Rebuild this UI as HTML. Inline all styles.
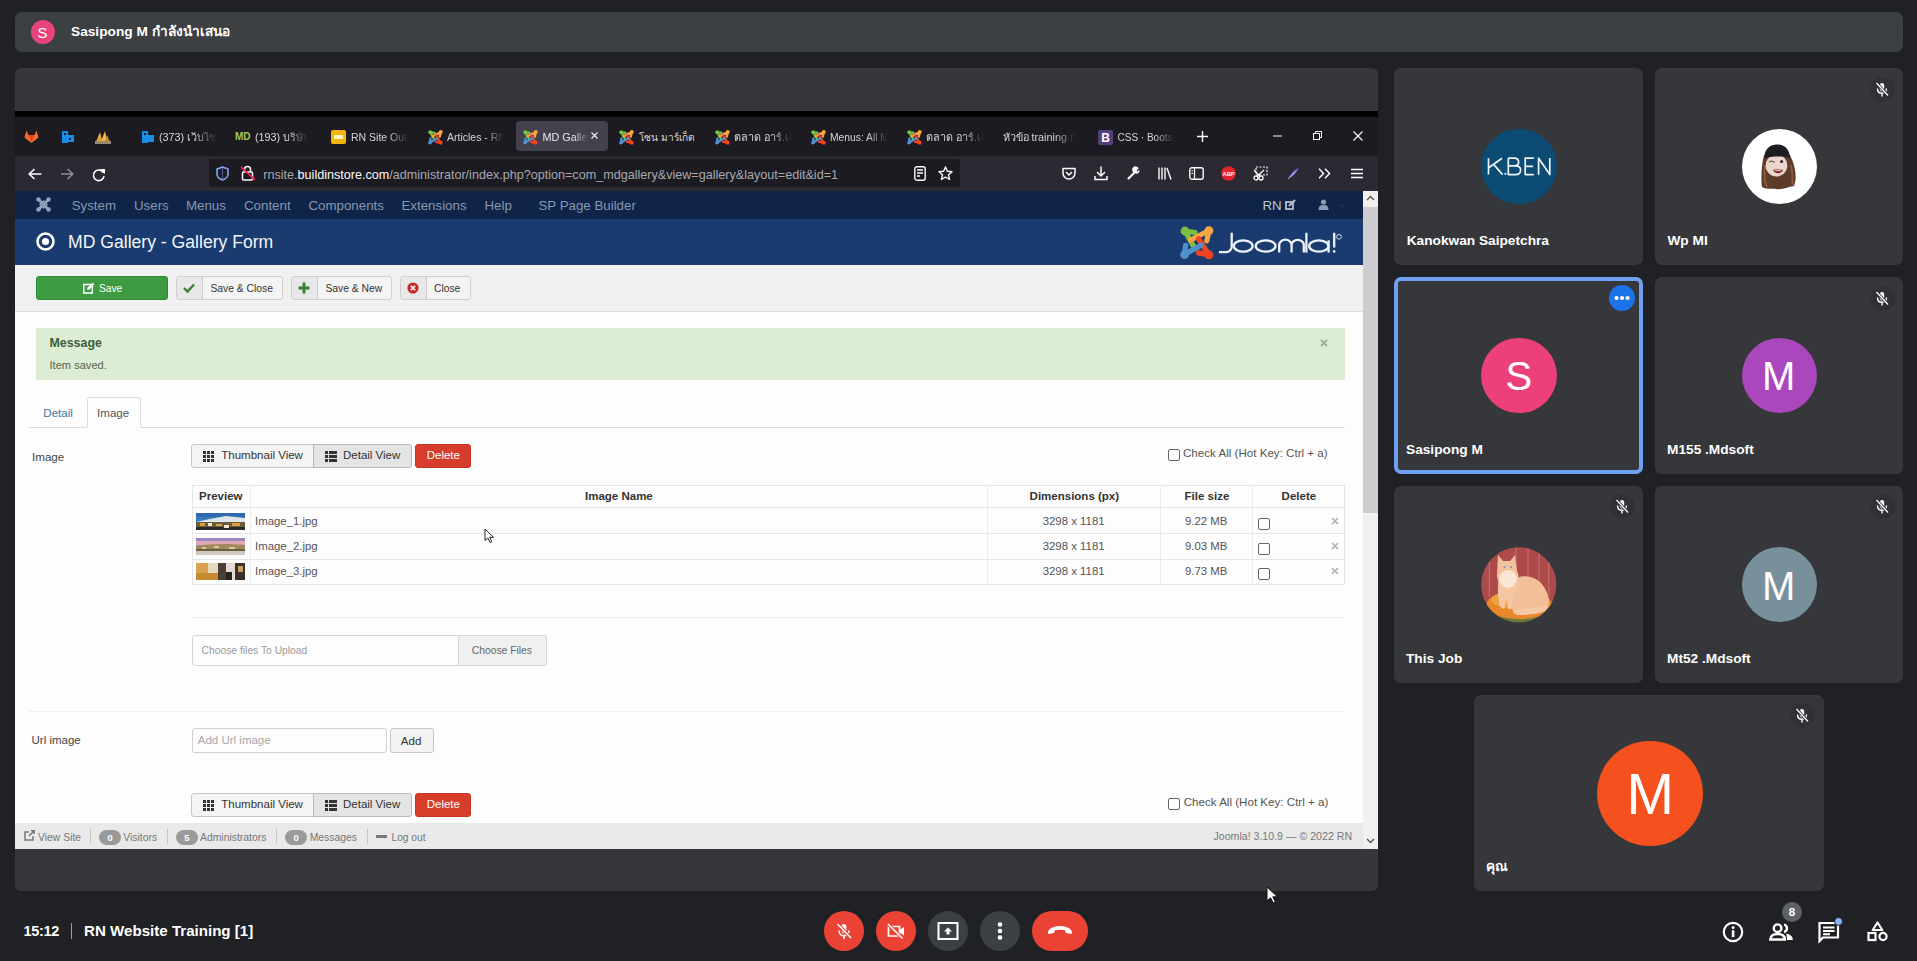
<!DOCTYPE html>
<html><head><meta charset="utf-8">
<style>
*{margin:0;padding:0;box-sizing:border-box}
html,body{width:1917px;height:961px;overflow:hidden;background:#202124;font-family:"Liberation Sans",sans-serif;position:relative}
.a{position:absolute}
.t{position:absolute;white-space:nowrap;line-height:1}
svg{overflow:visible}
</style></head><body>
<div class="a" style="left:15px;top:12px;width:1888px;height:40px;background:#3c4043;border-radius:7px"></div>
<div class="a" style="left:31px;top:20px;width:24px;height:24px;border-radius:50%;background:#e8437a"></div>
<div class="t" style="left:37.5px;top:25.3px;font-size:15px;color:#fff;font-weight:normal;">S</div>
<div class="t" style="left:71.0px;top:25.4px;font-size:13.7px;color:#fff;font-weight:bold;">Sasipong M กำลังนำเสนอ</div>
<div class="a" style="left:15px;top:68px;width:1363px;height:823px;background:#36373a;border-radius:6px"></div>
<div class="a" style="left:15px;top:111px;width:1363px;height:6px;background:#000;"></div>
<div class="a" style="left:15px;top:117px;width:1363px;height:39px;background:#1c1b22;"></div>
<div class="a" style="left:15px;top:156px;width:1363px;height:35px;background:#2b2a33;"></div>
<div class="a" style="left:209px;top:159px;width:751px;height:28px;background:#1c1b22;border-radius:3px"></div>
<div class="a" style="left:516px;top:121px;width:92px;height:30px;background:#42414d;border-radius:4px"></div>
<svg class="a" style="left:24px;top:130px;" width="15" height="13" viewBox="0 0 15 13"><path d="M7.5 13 L0.5 7.5 L2.5 0.5 L4.5 5 L10.5 5 L12.5 0.5 L14.5 7.5 Z" fill="#fc6d26"/><path d="M7.5 13 L4.5 5 L10.5 5Z" fill="#e24329"/></svg>
<svg class="a" style="left:62px;top:130px;" width="13" height="14" viewBox="0 0 13 14"><rect x="0" y="1" width="6" height="12" fill="#1b8ce8"/><rect x="6" y="5" width="6" height="7" fill="#1b8ce8"/><rect x="2" y="3" width="2" height="2" fill="#1c1b22"/><rect x="7" y="8" width="2" height="2" fill="#1c1b22"/></svg>
<svg class="a" style="left:95px;top:130px;" width="16" height="14" viewBox="0 0 16 14"><path d="M0 14 L5 2 L8 14Z" fill="#e8a33c"/><path d="M5 14 L10 1 L13 14Z" fill="#f0b84a"/><path d="M9 14 L12 5 L16 14Z" fill="#c98a2a"/><rect x="0" y="11" width="16" height="3" fill="#9a8a70"/></svg>
<svg class="a" style="left:142px;top:130px;" width="12" height="14" viewBox="0 0 12 14"><rect x="0" y="1" width="6" height="12" fill="#1b8ce8"/><rect x="6" y="5" width="6" height="7" fill="#1b8ce8"/><rect x="2" y="3" width="2" height="2" fill="#1c1b22"/></svg>
<div class="t" style="left:159.0px;top:132.2px;font-size:10.8px;color:#d6d6d6;font-weight:normal;width:58px;overflow:hidden;-webkit-mask-image:linear-gradient(90deg,#000 60%,transparent)">(373) เว็บไซต์</div>
<svg class="a" style="left:235px;top:131px;" width="14" height="10" viewBox="0 0 14 10"><text x="0" y="9" font-family="Liberation Sans" font-weight="bold" font-size="10" fill="#a6c954">MD</text></svg>
<div class="t" style="left:255.0px;top:132.2px;font-size:10.8px;color:#d6d6d6;font-weight:normal;width:53px;overflow:hidden;-webkit-mask-image:linear-gradient(90deg,#000 60%,transparent)">(193) บริษัท</div>
<svg class="a" style="left:331px;top:130px;" width="15" height="14" viewBox="0 0 15 14"><rect x="0" y="0" width="15" height="14" rx="2" fill="#f5b50b"/><rect x="3" y="5" width="9" height="4" fill="#fff3c4"/></svg>
<div class="t" style="left:351.0px;top:132.4px;font-size:10.5px;color:#d6d6d6;font-weight:normal;width:57px;overflow:hidden;-webkit-mask-image:linear-gradient(90deg,#000 65%,transparent)">RN Site Outlook</div>
<svg class="a" style="left:427.5px;top:129.5px" width="15" height="15" viewBox="0 0 34 34"><g fill="none" stroke-width="5.3" stroke-linecap="round" stroke-linejoin="round">
<path d="M15 6.5 L5 5 L14 21" stroke="#7ac143"/>
<path d="M26.8 14.7 L29 4.5 L10.6 14" stroke="#f9a541"/>
<path d="M18.5 26.8 L29 29 L18.5 12.7" stroke="#f44321"/>
<path d="M5.6 19.3 L4.5 28.5 L21 19.3" stroke="#5091cd"/>
</g>
<g><circle cx="5" cy="5" r="4.4" fill="#7ac143"/><circle cx="29" cy="4.6" r="4.4" fill="#f9a541"/><circle cx="29" cy="29" r="4.4" fill="#f44321"/><circle cx="4.6" cy="28.6" r="4.4" fill="#5091cd"/></g></svg>
<div class="t" style="left:447.0px;top:132.4px;font-size:10.5px;color:#d6d6d6;font-weight:normal;width:57px;overflow:hidden;-webkit-mask-image:linear-gradient(90deg,#000 65%,transparent)">Articles - RN Site</div>
<svg class="a" style="left:523px;top:129.5px" width="15" height="15" viewBox="0 0 34 34"><g fill="none" stroke-width="5.3" stroke-linecap="round" stroke-linejoin="round">
<path d="M15 6.5 L5 5 L14 21" stroke="#7ac143"/>
<path d="M26.8 14.7 L29 4.5 L10.6 14" stroke="#f9a541"/>
<path d="M18.5 26.8 L29 29 L18.5 12.7" stroke="#f44321"/>
<path d="M5.6 19.3 L4.5 28.5 L21 19.3" stroke="#5091cd"/>
</g>
<g><circle cx="5" cy="5" r="4.4" fill="#7ac143"/><circle cx="29" cy="4.6" r="4.4" fill="#f9a541"/><circle cx="29" cy="29" r="4.4" fill="#f44321"/><circle cx="4.6" cy="28.6" r="4.4" fill="#5091cd"/></g></svg>
<div class="t" style="left:542.5px;top:132.2px;font-size:10.8px;color:#e8e8ea;font-weight:normal;width:46px;overflow:hidden;-webkit-mask-image:linear-gradient(90deg,#000 65%,transparent)">MD Gallery</div>
<svg class="a" style="left:591px;top:132px;" width="7" height="7" viewBox="0 0 7 7"><path d="M0.5 0.5 L6.5 6.5 M6.5 0.5 L0.5 6.5" stroke="#e8e8ea" stroke-width="1.3"/></svg>
<svg class="a" style="left:618.5px;top:129.5px" width="15" height="15" viewBox="0 0 34 34"><g fill="none" stroke-width="5.3" stroke-linecap="round" stroke-linejoin="round">
<path d="M15 6.5 L5 5 L14 21" stroke="#7ac143"/>
<path d="M26.8 14.7 L29 4.5 L10.6 14" stroke="#f9a541"/>
<path d="M18.5 26.8 L29 29 L18.5 12.7" stroke="#f44321"/>
<path d="M5.6 19.3 L4.5 28.5 L21 19.3" stroke="#5091cd"/>
</g>
<g><circle cx="5" cy="5" r="4.4" fill="#7ac143"/><circle cx="29" cy="4.6" r="4.4" fill="#f9a541"/><circle cx="29" cy="29" r="4.4" fill="#f44321"/><circle cx="4.6" cy="28.6" r="4.4" fill="#5091cd"/></g></svg>
<div class="t" style="left:639.0px;top:132.7px;font-size:10.2px;color:#d6d6d6;font-weight:normal;">โซน มาร์เก็ต</div>
<svg class="a" style="left:715px;top:129.5px" width="15" height="15" viewBox="0 0 34 34"><g fill="none" stroke-width="5.3" stroke-linecap="round" stroke-linejoin="round">
<path d="M15 6.5 L5 5 L14 21" stroke="#7ac143"/>
<path d="M26.8 14.7 L29 4.5 L10.6 14" stroke="#f9a541"/>
<path d="M18.5 26.8 L29 29 L18.5 12.7" stroke="#f44321"/>
<path d="M5.6 19.3 L4.5 28.5 L21 19.3" stroke="#5091cd"/>
</g>
<g><circle cx="5" cy="5" r="4.4" fill="#7ac143"/><circle cx="29" cy="4.6" r="4.4" fill="#f9a541"/><circle cx="29" cy="29" r="4.4" fill="#f44321"/><circle cx="4.6" cy="28.6" r="4.4" fill="#5091cd"/></g></svg>
<div class="t" style="left:734.0px;top:132.2px;font-size:10.8px;color:#d6d6d6;font-weight:normal;width:58px;overflow:hidden;-webkit-mask-image:linear-gradient(90deg,#000 65%,transparent)">ตลาด อาร์.เอ็ม</div>
<svg class="a" style="left:811px;top:129.5px" width="15" height="15" viewBox="0 0 34 34"><g fill="none" stroke-width="5.3" stroke-linecap="round" stroke-linejoin="round">
<path d="M15 6.5 L5 5 L14 21" stroke="#7ac143"/>
<path d="M26.8 14.7 L29 4.5 L10.6 14" stroke="#f9a541"/>
<path d="M18.5 26.8 L29 29 L18.5 12.7" stroke="#f44321"/>
<path d="M5.6 19.3 L4.5 28.5 L21 19.3" stroke="#5091cd"/>
</g>
<g><circle cx="5" cy="5" r="4.4" fill="#7ac143"/><circle cx="29" cy="4.6" r="4.4" fill="#f9a541"/><circle cx="29" cy="29" r="4.4" fill="#f44321"/><circle cx="4.6" cy="28.6" r="4.4" fill="#5091cd"/></g></svg>
<div class="t" style="left:830.0px;top:132.6px;font-size:10.3px;color:#d6d6d6;font-weight:normal;width:58px;overflow:hidden;-webkit-mask-image:linear-gradient(90deg,#000 65%,transparent)">Menus: All Menu</div>
<svg class="a" style="left:906.5px;top:129.5px" width="15" height="15" viewBox="0 0 34 34"><g fill="none" stroke-width="5.3" stroke-linecap="round" stroke-linejoin="round">
<path d="M15 6.5 L5 5 L14 21" stroke="#7ac143"/>
<path d="M26.8 14.7 L29 4.5 L10.6 14" stroke="#f9a541"/>
<path d="M18.5 26.8 L29 29 L18.5 12.7" stroke="#f44321"/>
<path d="M5.6 19.3 L4.5 28.5 L21 19.3" stroke="#5091cd"/>
</g>
<g><circle cx="5" cy="5" r="4.4" fill="#7ac143"/><circle cx="29" cy="4.6" r="4.4" fill="#f9a541"/><circle cx="29" cy="29" r="4.4" fill="#f44321"/><circle cx="4.6" cy="28.6" r="4.4" fill="#5091cd"/></g></svg>
<div class="t" style="left:926.0px;top:132.2px;font-size:10.8px;color:#d6d6d6;font-weight:normal;width:58px;overflow:hidden;-webkit-mask-image:linear-gradient(90deg,#000 65%,transparent)">ตลาด อาร์.เอ็ม</div>
<div class="t" style="left:1002.5px;top:132.2px;font-size:10.8px;color:#d6d6d6;font-weight:normal;width:73px;overflow:hidden;-webkit-mask-image:linear-gradient(90deg,#000 70%,transparent)">หัวข้อ training กลุ่ม</div>
<svg class="a" style="left:1098px;top:129.5px;" width="15" height="15" viewBox="0 0 15 15"><rect width="15" height="15" rx="2" fill="#563d7c"/><text x="3.2" y="12" font-family="Liberation Sans" font-weight="bold" font-size="12" fill="#fff">B</text></svg>
<div class="t" style="left:1117.5px;top:132.8px;font-size:10px;color:#d6d6d6;font-weight:normal;width:56px;overflow:hidden;-webkit-mask-image:linear-gradient(90deg,#000 65%,transparent)">CSS · Bootstrap</div>
<svg class="a" style="left:1197px;top:131px;" width="11" height="11" viewBox="0 0 11 11"><path d="M5.5 0 V11 M0 5.5 H11" stroke="#fbfbfe" stroke-width="1.4"/></svg>
<svg class="a" style="left:1273px;top:135px;" width="9" height="2" viewBox="0 0 9 2"><path d="M0 1 H9" stroke="#fbfbfe" stroke-width="1"/></svg>
<svg class="a" style="left:1313px;top:131px;" width="9" height="9" viewBox="0 0 9 9"><rect x="0.5" y="2.5" width="6" height="6" fill="none" stroke="#fbfbfe" stroke-width="1"/><path d="M2.5 2.5 V0.5 H8.5 V6.5 H6.5" fill="none" stroke="#fbfbfe" stroke-width="1"/></svg>
<svg class="a" style="left:1353px;top:131px;" width="10" height="10" viewBox="0 0 10 10"><path d="M0.5 0.5 L9.5 9.5 M9.5 0.5 L0.5 9.5" stroke="#fbfbfe" stroke-width="1.2"/></svg>
<svg class="a" style="left:28px;top:168px;" width="14" height="12" viewBox="0 0 14 12"><path d="M13.5 6 H1.5 M6.5 1 L1.2 6 L6.5 11" fill="none" stroke="#fbfbfe" stroke-width="1.6"/></svg>
<svg class="a" style="left:61px;top:168px;" width="13" height="12" viewBox="0 0 13 12"><path d="M0 6 H11.5 M6.5 1 L11.8 6 L6.5 11" fill="none" stroke="#8f8f9d" stroke-width="1.5"/></svg>
<svg class="a" style="left:92px;top:168px;" width="14" height="13" viewBox="0 0 14 13"><path d="M11.5 5 A5.3 5.3 0 1 0 12 8" fill="none" stroke="#fbfbfe" stroke-width="1.6"/><path d="M8 1 L13 1 L13 6Z" fill="#fbfbfe"/></svg>
<svg class="a" style="left:216px;top:166px;" width="13" height="15" viewBox="0 0 13 15"><path d="M6.5 1 L12 3 V8 C12 11 9.5 13 6.5 14 C3.5 13 1 11 1 8 V3Z" fill="none" stroke="#80b9f0" stroke-width="1.5"/><path d="M6.5 1 L12 3 V8 C12 11 9.5 13 6.5 14Z" fill="none" stroke="#7c6fd8" stroke-width="1.2" opacity="0.6"/></svg>
<svg class="a" style="left:241px;top:165px;" width="14" height="16" viewBox="0 0 14 16"><rect x="1.5" y="7" width="10" height="8" rx="1" fill="none" stroke="#fbfbfe" stroke-width="1.5"/><path d="M3.5 7 V4.5 A3 3 0 0 1 9.5 4.5 V7" fill="none" stroke="#fbfbfe" stroke-width="1.5"/><path d="M0 2 L14 15" stroke="#e22850" stroke-width="1.8"/></svg>
<div class="t" style="left:263.3px;top:169px;font-size:12.6px;color:#a8a8b0">rnsite.<span style="color:#fbfbfe">buildinstore.com</span>/administrator/index.php?option=com_mdgallery&amp;view=gallery&amp;layout=edit&amp;id=1</div>
<svg class="a" style="left:914px;top:166px;" width="12" height="15" viewBox="0 0 12 15"><rect x="0.8" y="0.8" width="10.4" height="13.4" rx="2" fill="none" stroke="#fbfbfe" stroke-width="1.4"/><path d="M3 4 H9 M3 7 H9 M3 10 H6" stroke="#fbfbfe" stroke-width="1.3"/></svg>
<svg class="a" style="left:938px;top:166px;" width="15" height="15" viewBox="0 0 15 15"><path d="M7.5 1 L9.4 5.3 L14 5.7 L10.5 8.8 L11.6 13.5 L7.5 11 L3.4 13.5 L4.5 8.8 L1 5.7 L5.6 5.3Z" fill="none" stroke="#fbfbfe" stroke-width="1.4" stroke-linejoin="round"/></svg>
<svg class="a" style="left:1062px;top:167px;" width="14" height="13" viewBox="0 0 14 13"><path d="M1 1.5 H13 V6 A6 6 0 0 1 1 6Z" fill="none" stroke="#fbfbfe" stroke-width="1.5" stroke-linejoin="round"/><path d="M4 5 L7 8 L10 5" fill="none" stroke="#fbfbfe" stroke-width="1.5"/></svg>
<svg class="a" style="left:1094px;top:166px;" width="14" height="15" viewBox="0 0 14 15"><path d="M7 0.5 V10 M3 6 L7 10 L11 6" fill="none" stroke="#fbfbfe" stroke-width="1.5"/><path d="M1 10 V13.5 H13 V10" fill="none" stroke="#fbfbfe" stroke-width="1.5"/></svg>
<svg class="a" style="left:1127px;top:166px;" width="13" height="14" viewBox="0 0 13 14"><path d="M1.5 12.5 L7 7" stroke="#fbfbfe" stroke-width="2.2" stroke-linecap="round"/><path d="M7 7 A3.5 3.5 0 1 1 11.8 2.5 L9.5 4.5 L10.5 5.5 L12.5 3.5 A3.5 3.5 0 0 1 7 7" fill="#fbfbfe"/></svg>
<svg class="a" style="left:1158px;top:167px;" width="14" height="13" viewBox="0 0 14 13"><path d="M1 0.5 V12.5 M4 0.5 V12.5 M7 0.5 V12.5 M9 1 L13 12.5" stroke="#fbfbfe" stroke-width="1.4"/></svg>
<svg class="a" style="left:1189px;top:167px;" width="15" height="13" viewBox="0 0 15 13"><rect x="0.8" y="0.8" width="13.4" height="11.4" rx="2" fill="none" stroke="#fbfbfe" stroke-width="1.4"/><path d="M5.5 1 V12 M2.5 4 H4 M2.5 6.5 H4" stroke="#fbfbfe" stroke-width="1.2"/></svg>
<svg class="a" style="left:1221px;top:166px;" width="15" height="15" viewBox="0 0 15 15"><circle cx="7.5" cy="7.5" r="7.3" fill="#e4242b"/><text x="1.6" y="9.6" font-family="Liberation Sans" font-weight="bold" font-size="5.6" fill="#fff">ABP</text></svg>
<svg class="a" style="left:1253px;top:166px;" width="15" height="15" viewBox="0 0 15 15"><rect x="3" y="1" width="11" height="8" fill="none" stroke="#fbfbfe" stroke-width="1.2" stroke-dasharray="2 1.5"/><circle cx="3" cy="12" r="2" fill="none" stroke="#fbfbfe" stroke-width="1.3"/><circle cx="8" cy="12" r="2" fill="none" stroke="#fbfbfe" stroke-width="1.3"/><path d="M4 10.5 L11 4 M7 10.5 L1 4" stroke="#fbfbfe" stroke-width="1.3"/></svg>
<svg class="a" style="left:1287px;top:167px;" width="12" height="13" viewBox="0 0 12 13"><path d="M1 12 C3 8 7 3 11.5 1 C10 5 6 10 1 12Z" fill="#8c6fe0"/><path d="M1 12 L8 5" stroke="#c6b8f5" stroke-width="0.8"/></svg>
<svg class="a" style="left:1318px;top:168px;" width="13" height="11" viewBox="0 0 13 11"><path d="M1 0.8 L5.5 5.5 L1 10.2 M7 0.8 L11.5 5.5 L7 10.2" fill="none" stroke="#fbfbfe" stroke-width="1.5"/></svg>
<svg class="a" style="left:1351px;top:168px;" width="12" height="11" viewBox="0 0 12 11"><path d="M0 1.5 H12 M0 5.5 H12 M0 9.5 H12" stroke="#fbfbfe" stroke-width="1.4"/></svg>
<div class="a" style="left:15px;top:191px;width:1348px;height:28px;background:#0f2448;"></div>
<div class="a" style="left:15px;top:219px;width:1348px;height:46px;background:#1a3b6f;"></div>
<div class="a" style="left:15px;top:265px;width:1348px;height:47px;background:#f0f0f0;"></div>
<div class="a" style="left:15px;top:311px;width:1348px;height:1px;background:#dddddd;"></div>
<div class="a" style="left:15px;top:312px;width:1348px;height:511px;background:#fdfdfd;"></div>
<div class="a" style="left:15px;top:823px;width:1348px;height:26px;background:#e9e9e9;"></div>
<div class="a" style="left:1363px;top:191px;width:15px;height:658px;background:#f0f0f0;"></div>
<div class="a" style="left:1363px;top:207px;width:15px;height:306px;background:#cdcdd0;"></div>
<svg class="a" style="left:1366px;top:195px;" width="9" height="6" viewBox="0 0 9 6"><path d="M1 5 L4.5 1.5 L8 5" fill="none" stroke="#505050" stroke-width="1.3"/></svg>
<svg class="a" style="left:1366px;top:838px;" width="9" height="6" viewBox="0 0 9 6"><path d="M1 1 L4.5 4.5 L8 1" fill="none" stroke="#505050" stroke-width="1.3"/></svg>
<svg class="a" style="left:36px;top:197px;" width="15" height="15" viewBox="0 0 15 15"><g fill="#8fa2bc"><circle cx="2.5" cy="2.5" r="2.3"/><circle cx="12.5" cy="2.5" r="2.3"/><circle cx="2.5" cy="12.5" r="2.3"/><circle cx="12.5" cy="12.5" r="2.3"/></g>
<path d="M2.5 2.5 L12.5 12.5 M12.5 2.5 L2.5 12.5" stroke="#8fa2bc" stroke-width="2.6"/><rect x="5" y="5" width="5" height="5" fill="none" stroke="#8fa2bc" stroke-width="1.4" transform="rotate(45 7.5 7.5)"/></svg>
<div class="t" style="left:71.7px;top:199.0px;font-size:13.3px;color:#8798b1;font-weight:normal;">System</div>
<div class="t" style="left:134.0px;top:199.0px;font-size:13.3px;color:#8798b1;font-weight:normal;">Users</div>
<div class="t" style="left:186.0px;top:199.0px;font-size:13.3px;color:#8798b1;font-weight:normal;">Menus</div>
<div class="t" style="left:244.0px;top:199.0px;font-size:13.3px;color:#8798b1;font-weight:normal;">Content</div>
<div class="t" style="left:308.5px;top:199.0px;font-size:13.3px;color:#8798b1;font-weight:normal;">Components</div>
<div class="t" style="left:401.5px;top:199.0px;font-size:13.3px;color:#8798b1;font-weight:normal;">Extensions</div>
<div class="t" style="left:484.5px;top:199.0px;font-size:13.3px;color:#8798b1;font-weight:normal;">Help</div>
<div class="t" style="left:538.5px;top:199.0px;font-size:13.3px;color:#8798b1;font-weight:normal;">SP Page Builder</div>
<div class="t" style="left:1262.5px;top:199.0px;font-size:13.3px;color:#bcc7d6;font-weight:normal;">RN</div>
<svg class="a" style="left:1285px;top:199px;" width="11" height="11" viewBox="0 0 11 11"><rect x="1" y="3" width="7" height="7" fill="none" stroke="#b5c0d0" stroke-width="1.8"/><path d="M4 7 L10 1" stroke="#b5c0d0" stroke-width="2.2"/></svg>
<svg class="a" style="left:1318px;top:199px;" width="11" height="11" viewBox="0 0 11 11"><circle cx="5.5" cy="3" r="2.6" fill="#8c9cb4"/><path d="M0.5 11 C0.5 7 2.5 6 5.5 6 C8.5 6 10.5 7 10.5 11Z" fill="#8c9cb4"/></svg>
<svg class="a" style="left:1339px;top:205px;" width="6" height="4" viewBox="0 0 6 4"><path d="M0 0 L3 3 L6 0Z" fill="#1e3050"/></svg>
<svg class="a" style="left:36px;top:232px;" width="19" height="19" viewBox="0 0 19 19"><circle cx="9.5" cy="9.5" r="8" fill="none" stroke="#fff" stroke-width="2.6"/><circle cx="9.5" cy="9.5" r="3.6" fill="#fff"/></svg>
<div class="t" style="left:68.0px;top:234.1px;font-size:17.6px;color:#f2f5fa;font-weight:normal;">MD Gallery - Gallery Form</div>
<svg class="a" style="left:1180px;top:226px;" width="34" height="34" viewBox="0 0 34 34">
<g fill="none" stroke-width="5.3" stroke-linecap="round" stroke-linejoin="round">
<path d="M15 6.5 L5 5 L14 21" stroke="#7ac143"/>
<path d="M26.8 14.7 L29 4.5 L10.6 14" stroke="#f9a541"/>
<path d="M18.5 26.8 L29 29 L18.5 12.7" stroke="#f44321"/>
<path d="M5.6 19.3 L4.5 28.5 L21 19.3" stroke="#5091cd"/>
</g>
<g><circle cx="5" cy="5" r="4.4" fill="#7ac143"/><circle cx="29" cy="4.6" r="4.4" fill="#f9a541"/><circle cx="29" cy="29" r="4.4" fill="#f44321"/><circle cx="4.6" cy="28.6" r="4.4" fill="#5091cd"/></g>
</svg>
<svg class="a" style="left:1218px;top:232px;" width="125" height="22" viewBox="0 0 125 22"><g fill="none" stroke="#eef3fb" stroke-width="2.3">
<path d="M13.7 0.8 V14.5 A5.6 5.6 0 0 1 8.1 20.1 H1"/>
<ellipse cx="25.2" cy="14" rx="9.4" ry="5.7"/>
<ellipse cx="47.6" cy="14" rx="9.9" ry="5.7"/>
<path d="M61.2 20.6 V13 A6.1 5.2 0 0 1 73.6 13 V20.6 M73.6 13 A6.1 5.2 0 0 1 85.8 13 V20.6"/>
<path d="M88.4 0.8 V20.6"/>
<ellipse cx="100.8" cy="14" rx="9.6" ry="5.7"/>
<path d="M110.6 8.3 V20.6"/>
<path d="M116.2 0.8 V15.5"/>
</g><circle cx="116.2" cy="19.4" r="1.3" fill="#eef3fb"/><circle cx="121" cy="4.8" r="2.4" fill="none" stroke="#dfe6f0" stroke-width="0.9"/></svg>
<div class="a" style="left:36px;top:276px;width:132px;height:24px;background:#3d9c41;border-radius:3px;border:1px solid #2f8a33"></div>
<svg class="a" style="left:82.5px;top:282px;" width="12" height="12" viewBox="0 0 12 12"><rect x="0.8" y="2.5" width="8.5" height="8.5" fill="none" stroke="#fff" stroke-width="1.5"/><path d="M4 8 L4.6 5.5 L9.5 0.8 L11.3 2.6 L6.4 7.4Z" fill="#fff"/></svg>
<div class="t" style="left:99.0px;top:283.7px;font-size:10.2px;color:#fff;font-weight:normal;">Save</div>
<div class="a" style="left:176px;top:276px;width:107px;height:24px;background:#f4f4f4;border-radius:3px;border:1px solid #cfcfcf"></div>
<div class="a" style="left:177px;top:277px;width:25px;height:22px;background:#e8e8e8;border-radius:2px 0 0 2px"></div>
<div class="a" style="left:202px;top:277px;width:1px;height:22px;background:#cfcfcf;"></div>
<div class="t" style="left:210.5px;top:283.6px;font-size:10.3px;color:#333;font-weight:normal;">Save &amp; Close</div>
<svg class="a" style="left:183px;top:283px" width="12" height="10"><path d="M1 5 L4.5 8.5 L11 1.5" fill="none" stroke="#378137" stroke-width="2.4"/></svg>
<div class="a" style="left:291px;top:276px;width:101px;height:24px;background:#f4f4f4;border-radius:3px;border:1px solid #cfcfcf"></div>
<div class="a" style="left:292px;top:277px;width:25px;height:22px;background:#e8e8e8;border-radius:2px 0 0 2px"></div>
<div class="a" style="left:317px;top:277px;width:1px;height:22px;background:#cfcfcf;"></div>
<div class="t" style="left:325.5px;top:283.6px;font-size:10.3px;color:#333;font-weight:normal;">Save &amp; New</div>
<svg class="a" style="left:298px;top:282px" width="12" height="12"><path d="M6 0.5 V11.5 M0.5 6 H11.5" stroke="#378137" stroke-width="2.8"/></svg>
<div class="a" style="left:400px;top:276px;width:71px;height:24px;background:#f4f4f4;border-radius:3px;border:1px solid #cfcfcf"></div>
<div class="a" style="left:401px;top:277px;width:25px;height:22px;background:#e8e8e8;border-radius:2px 0 0 2px"></div>
<div class="a" style="left:426px;top:277px;width:1px;height:22px;background:#cfcfcf;"></div>
<div class="t" style="left:434.0px;top:283.6px;font-size:10.3px;color:#333;font-weight:normal;">Close</div>
<svg class="a" style="left:407px;top:282px" width="12" height="12"><circle cx="6" cy="6" r="5.6" fill="#c52827"/><path d="M3.8 3.8 L8.2 8.2 M8.2 3.8 L3.8 8.2" stroke="#fff" stroke-width="1.6"/></svg>
<div class="a" style="left:36px;top:328px;width:1309px;height:52px;background:#dcedd3;"></div>
<div class="t" style="left:49.5px;top:336.8px;font-size:12.4px;color:#3b5e3b;font-weight:bold;">Message</div>
<div class="t" style="left:49.5px;top:359.6px;font-size:11.1px;color:#536453;font-weight:normal;">Item saved.</div>
<svg class="a" style="left:1319.5px;top:339px;" width="8" height="8" viewBox="0 0 8 8"><path d="M1 1 L7 7 M7 1 L1 7" stroke="#9aae9a" stroke-width="1.8"/></svg>
<div class="a" style="left:29px;top:427px;width:1316px;height:1px;background:#dddddd;"></div>
<div class="a" style="left:86.5px;top:397px;width:54px;height:31px;background:#fdfdfd;border:1px solid #dddddd;border-bottom-color:#fdfdfd;border-radius:3px 3px 0 0"></div>
<div class="t" style="left:43.3px;top:406.5px;font-size:11.6px;color:#3775a8;font-weight:normal;">Detail</div>
<div class="t" style="left:97.0px;top:406.5px;font-size:11.6px;color:#555;font-weight:normal;">Image</div>
<div class="t" style="left:32.0px;top:450.7px;font-size:11.6px;color:#444;font-weight:normal;">Image</div>
<div class="a" style="left:191px;top:444px;width:123px;height:24px;background:#f4f4f4;border:1px solid #c6c6c6;border-radius:3px 0 0 3px"></div>
<div class="a" style="left:313px;top:444px;width:99px;height:24px;background:#e4e4e4;border:1px solid #b9b9b9;border-radius:0 3px 3px 0"></div>
<div class="a" style="left:415px;top:444px;width:56px;height:24px;background:#d73d2a;border-radius:3px;border:1px solid #c33524"></div>
<svg class="a" style="left:203px;top:451px;" width="11" height="11" viewBox="0 0 11 11"><g fill="#333"><rect x="0" y="0" width="3" height="3"/><rect x="4" y="0" width="3" height="3"/><rect x="8" y="0" width="3" height="3"/><rect x="0" y="4" width="3" height="3"/><rect x="4" y="4" width="3" height="3"/><rect x="8" y="4" width="3" height="3"/><rect x="0" y="8" width="3" height="3"/><rect x="4" y="8" width="3" height="3"/><rect x="8" y="8" width="3" height="3"/></g></svg>
<div class="t" style="left:221.3px;top:450.1px;font-size:11.5px;color:#333;font-weight:normal;">Thumbnail View</div>
<svg class="a" style="left:325px;top:451px;" width="12" height="11" viewBox="0 0 12 11"><g fill="#333"><rect x="0" y="0" width="3" height="3"/><rect x="4" y="0" width="8" height="3"/><rect x="0" y="4" width="3" height="3"/><rect x="4" y="4" width="8" height="3"/><rect x="0" y="8" width="3" height="3"/><rect x="4" y="8" width="8" height="3"/></g></svg>
<div class="t" style="left:343.0px;top:450.1px;font-size:11.5px;color:#333;font-weight:normal;">Detail View</div>
<div class="t" style="left:426.7px;top:450.1px;font-size:11.5px;color:#fff;font-weight:normal;">Delete</div>
<div class="a" style="left:1167.5px;top:448.5px;width:12px;height:12px;border:1px solid #666;border-radius:2px;background:#fff"></div>
<div class="t" style="left:1183.0px;top:446.5px;font-size:11.6px;color:#555;font-weight:normal;">Check All (Hot Key: Ctrl + a)</div>
<div class="a" style="left:192px;top:484.5px;width:1153px;height:100px;background:#fdfdfd;border:1px solid #e6e6e6"></div>
<div class="a" style="left:193px;top:507px;width:1151px;height:1px;background:#e6e6e6;"></div>
<div class="a" style="left:193px;top:533px;width:1151px;height:1px;background:#e6e6e6;"></div>
<div class="a" style="left:193px;top:558.5px;width:1151px;height:1px;background:#e6e6e6;"></div>
<div class="a" style="left:249.5px;top:485px;width:1px;height:99px;background:#ececec;"></div>
<div class="a" style="left:987px;top:485px;width:1px;height:99px;background:#ececec;"></div>
<div class="a" style="left:1160px;top:485px;width:1px;height:99px;background:#ececec;"></div>
<div class="a" style="left:1252px;top:485px;width:1px;height:99px;background:#ececec;"></div>
<div class="t" style="left:199.0px;top:490.8px;font-size:11.5px;color:#333;font-weight:bold;">Preview</div>
<div class="t" style="left:585.0px;top:490.8px;font-size:11.5px;color:#333;font-weight:bold;">Image Name</div>
<div class="t" style="left:1029.6px;top:490.8px;font-size:11.5px;color:#333;font-weight:bold;">Dimensions (px)</div>
<div class="t" style="left:1184.6px;top:490.8px;font-size:11.5px;color:#333;font-weight:bold;">File size</div>
<div class="t" style="left:1281.6px;top:490.8px;font-size:11.5px;color:#333;font-weight:bold;">Delete</div>
<svg class="a" style="left:196.3px;top:513px;filter:blur(0.35px)" width="49" height="17" viewBox="0 0 49 17"><rect width="49" height="17" fill="#3a78c0"/><rect y="0" width="49" height="4" fill="#2f6aae"/><path d="M0 9 L14 6 L30 3 L49 5 V17 H0Z" fill="#dfe6ea"/><rect y="9" width="49" height="8" fill="#6b5a3e"/><g fill="#e0a040"><rect x="4" y="10" width="5" height="3"/><rect x="20" y="11" width="6" height="2"/><rect x="36" y="10" width="8" height="3"/></g><g fill="#2a2a28"><rect x="0" y="14" width="49" height="3"/></g><g fill="#f0e8d0"><rect x="12" y="10" width="4" height="3"/><rect x="28" y="12" width="5" height="3"/></g></svg>
<div class="t" style="left:255.0px;top:515.8px;font-size:11.4px;color:#555;font-weight:normal;">Image_1.jpg</div>
<div class="t" style="left:1042.7px;top:515.8px;font-size:11.4px;color:#555;font-weight:normal;">3298 x 1181</div>
<div class="t" style="left:1185.0px;top:515.8px;font-size:11.4px;color:#555;font-weight:normal;">9.22 MB</div>
<div class="a" style="left:1257.5px;top:517.5px;width:12px;height:12px;border:1px solid #666;border-radius:2px;background:#fff"></div>
<svg class="a" style="left:1331px;top:517px;" width="8" height="8" viewBox="0 0 8 8"><path d="M1 1 L7 7 M7 1 L1 7" stroke="#b0b0b0" stroke-width="1.6"/></svg>
<svg class="a" style="left:196.3px;top:538.3px;filter:blur(0.35px)" width="49" height="17" viewBox="0 0 49 17"><rect width="49" height="17" fill="#9a88c4"/><rect y="3" width="49" height="4" fill="#e2aab4"/><path d="M0 8 C12 6 30 5 49 7 V14 H0Z" fill="#a08a5a"/><g fill="#d8c8a0"><rect x="6" y="9" width="4" height="2"/><rect x="18" y="8" width="5" height="2"/><rect x="33" y="9" width="6" height="2"/></g><rect y="13" width="49" height="4" fill="#cfc8bc"/><rect y="11" width="49" height="2" fill="#6a6040"/></svg>
<div class="t" style="left:255.0px;top:540.8px;font-size:11.4px;color:#555;font-weight:normal;">Image_2.jpg</div>
<div class="t" style="left:1042.7px;top:540.8px;font-size:11.4px;color:#555;font-weight:normal;">3298 x 1181</div>
<div class="t" style="left:1185.0px;top:540.8px;font-size:11.4px;color:#555;font-weight:normal;">9.03 MB</div>
<div class="a" style="left:1257.5px;top:542.8px;width:12px;height:12px;border:1px solid #666;border-radius:2px;background:#fff"></div>
<svg class="a" style="left:1331px;top:542.3px;" width="8" height="8" viewBox="0 0 8 8"><path d="M1 1 L7 7 M7 1 L1 7" stroke="#b0b0b0" stroke-width="1.6"/></svg>
<svg class="a" style="left:196.3px;top:563.3px;filter:blur(0.35px)" width="49" height="17" viewBox="0 0 49 17"><rect width="49" height="17" fill="#b07a3a"/><rect x="0" y="0" width="12" height="17" fill="#d8a050"/><rect x="12" y="0" width="10" height="17" fill="#e8d8c0"/><rect x="22" y="0" width="8" height="17" fill="#4a4038"/><rect x="30" y="0" width="9" height="17" fill="#e4dcd4"/><rect x="39" y="0" width="10" height="17" fill="#3a3028"/><rect x="0" y="10" width="22" height="7" fill="#c88a30"/><rect x="30" y="9" width="6" height="8" fill="#2a2420"/><rect x="42" y="3" width="5" height="6" fill="#c8a060"/></svg>
<div class="t" style="left:255.0px;top:566.1px;font-size:11.4px;color:#555;font-weight:normal;">Image_3.jpg</div>
<div class="t" style="left:1042.7px;top:566.1px;font-size:11.4px;color:#555;font-weight:normal;">3298 x 1181</div>
<div class="t" style="left:1185.0px;top:566.1px;font-size:11.4px;color:#555;font-weight:normal;">9.73 MB</div>
<div class="a" style="left:1257.5px;top:567.8px;width:12px;height:12px;border:1px solid #666;border-radius:2px;background:#fff"></div>
<svg class="a" style="left:1331px;top:567.3px;" width="8" height="8" viewBox="0 0 8 8"><path d="M1 1 L7 7 M7 1 L1 7" stroke="#b0b0b0" stroke-width="1.6"/></svg>
<svg class="a" style="left:484px;top:528px;" width="11" height="16" viewBox="0 0 11 16"><path d="M1 1 L1 12.5 L3.8 10 L6 14.5 L7.8 13.7 L5.7 9.3 L9.5 9.3Z" fill="#fff" stroke="#222" stroke-width="1"/></svg>
<div class="a" style="left:192px;top:617px;width:1153px;height:1px;background:#eeeeee;"></div>
<div class="a" style="left:192px;top:634.5px;width:267px;height:31px;background:#fdfdfd;border:1px solid #d6d6d6;border-radius:3px 0 0 3px"></div>
<div class="a" style="left:458px;top:634.5px;width:88.5px;height:31px;background:#f0f0f0;border:1px solid #d6d6d6;border-radius:0 3px 3px 0"></div>
<div class="t" style="left:201.6px;top:645.8px;font-size:10.3px;color:#9a9a9a;font-weight:normal;">Choose files To Upload</div>
<div class="t" style="left:471.8px;top:645.8px;font-size:10.3px;color:#666;font-weight:normal;">Choose Files</div>
<div class="a" style="left:29px;top:711px;width:1316px;height:1px;background:#eeeeee;"></div>
<div class="t" style="left:31.5px;top:735.3px;font-size:11.5px;color:#444;font-weight:normal;">Url image</div>
<div class="a" style="left:192px;top:728px;width:195px;height:25px;background:#fdfdfd;border:1px solid #d0d0d0;border-radius:3px"></div>
<div class="t" style="left:197.8px;top:735.3px;font-size:11.5px;color:#a8a8a8;font-weight:normal;">Add Url image</div>
<div class="a" style="left:390px;top:728px;width:44px;height:25px;background:#f3f3f3;border:1px solid #c6c6c6;border-radius:3px"></div>
<div class="t" style="left:400.8px;top:735.2px;font-size:11.6px;color:#333;font-weight:normal;">Add</div>
<div class="a" style="left:191px;top:793px;width:123px;height:24px;background:#f4f4f4;border:1px solid #c6c6c6;border-radius:3px 0 0 3px"></div>
<div class="a" style="left:313px;top:793px;width:99px;height:24px;background:#e4e4e4;border:1px solid #b9b9b9;border-radius:0 3px 3px 0"></div>
<div class="a" style="left:415px;top:793px;width:56px;height:24px;background:#d73d2a;border-radius:3px;border:1px solid #c33524"></div>
<svg class="a" style="left:203px;top:800px;" width="11" height="11" viewBox="0 0 11 11"><g fill="#333"><rect x="0" y="0" width="3" height="3"/><rect x="4" y="0" width="3" height="3"/><rect x="8" y="0" width="3" height="3"/><rect x="0" y="4" width="3" height="3"/><rect x="4" y="4" width="3" height="3"/><rect x="8" y="4" width="3" height="3"/><rect x="0" y="8" width="3" height="3"/><rect x="4" y="8" width="3" height="3"/><rect x="8" y="8" width="3" height="3"/></g></svg>
<div class="t" style="left:221.3px;top:799.1px;font-size:11.5px;color:#333;font-weight:normal;">Thumbnail View</div>
<svg class="a" style="left:325px;top:800px;" width="12" height="11" viewBox="0 0 12 11"><g fill="#333"><rect x="0" y="0" width="3" height="3"/><rect x="4" y="0" width="8" height="3"/><rect x="0" y="4" width="3" height="3"/><rect x="4" y="4" width="8" height="3"/><rect x="0" y="8" width="3" height="3"/><rect x="4" y="8" width="8" height="3"/></g></svg>
<div class="t" style="left:343.0px;top:799.1px;font-size:11.5px;color:#333;font-weight:normal;">Detail View</div>
<div class="t" style="left:426.7px;top:799.1px;font-size:11.5px;color:#fff;font-weight:normal;">Delete</div>
<div class="a" style="left:1167.5px;top:797.5px;width:12px;height:12px;border:1px solid #666;border-radius:2px;background:#fff"></div>
<div class="t" style="left:1183.7px;top:795.7px;font-size:11.6px;color:#555;font-weight:normal;">Check All (Hot Key: Ctrl + a)</div>
<svg class="a" style="left:23.5px;top:830px;" width="11" height="11" viewBox="0 0 11 11"><path d="M5 2 H1 V10 H9 V6" fill="none" stroke="#777" stroke-width="1.5"/><path d="M5 6 L10 1 M7 0.8 H10.2 V4" fill="none" stroke="#777" stroke-width="1.5"/></svg>
<div class="t" style="left:38.0px;top:832.7px;font-size:10.4px;color:#777;font-weight:normal;">View Site</div>
<div class="a" style="left:90px;top:829px;width:1px;height:15px;background:#c4c4c4;"></div>
<div class="a" style="left:166.5px;top:829px;width:1px;height:15px;background:#c4c4c4;"></div>
<div class="a" style="left:276px;top:829px;width:1px;height:15px;background:#c4c4c4;"></div>
<div class="a" style="left:366.5px;top:829px;width:1px;height:15px;background:#c4c4c4;"></div>
<div class="a" style="left:99.3px;top:829.5px;width:21.5px;height:15px;border-radius:8px;background:#9a9a9a;color:#fff;font-size:9.5px;font-weight:bold;line-height:15px;text-align:center">0</div>
<div class="t" style="left:123.3px;top:832.7px;font-size:10.4px;color:#777;font-weight:normal;">Visitors</div>
<div class="a" style="left:176.2px;top:829.5px;width:21.5px;height:15px;border-radius:8px;background:#9a9a9a;color:#fff;font-size:9.5px;font-weight:bold;line-height:15px;text-align:center">5</div>
<div class="t" style="left:200.0px;top:832.7px;font-size:10.4px;color:#777;font-weight:normal;">Administrators</div>
<div class="a" style="left:285.4px;top:829.5px;width:21.5px;height:15px;border-radius:8px;background:#9a9a9a;color:#fff;font-size:9.5px;font-weight:bold;line-height:15px;text-align:center">0</div>
<div class="t" style="left:309.7px;top:832.7px;font-size:10.4px;color:#777;font-weight:normal;">Messages</div>
<div class="a" style="left:375.5px;top:835px;width:11.5px;height:2.5px;background:#777;"></div>
<div class="t" style="left:391.5px;top:832.9px;font-size:10.2px;color:#777;font-weight:normal;">Log out</div>
<div class="t" style="left:1213.5px;top:831.0px;font-size:10.6px;color:#777;font-weight:normal;">Joomla! 3.10.9 — © 2022 RN</div>
<div class="a" style="left:1394px;top:68px;width:249px;height:196.5px;background:#36373a;border-radius:7px;"></div>
<div class="a" style="left:1481px;top:128.7px;width:75.5px;height:75.5px;border-radius:50%;background:#0c4b74"></div>
<svg class="a" style="left:1486px;top:157px;" width="66" height="19" viewBox="0 0 66 19"><g fill="none" stroke="#eef4f8" stroke-width="1.7" stroke-linejoin="round"><path d="M2.5 1.2 V17.6 M16 1.2 L3 10.5 M7.6 7.4 L16.6 17.6"/><path d="M22.3 1.2 V17.6 H29 C32.6 17.6 34.6 15.6 34.6 12.9 C34.6 10.2 32.6 8.9 29 8.9 H22.3 M22.3 1.2 H28.2 C31.2 1.2 32.6 2.9 32.6 5.1 C32.6 7.5 31.2 8.9 28.2 8.9"/><path d="M47.8 1.2 H39.2 V17.6 H47.8 M39.2 9.3 H47"/><path d="M52.6 17.8 V1.2 L63.8 17.6 V1"/></g><circle cx="19.4" cy="16.8" r="1.1" fill="#eef4f8"/></svg>
<div class="t" style="left:1406.7px;top:234.4px;font-size:13.7px;color:#fff;font-weight:bold;">Kanokwan Saipetchra</div>
<div class="a" style="left:1655px;top:68px;width:248px;height:196.5px;background:#36373a;border-radius:7px;"></div>
<div class="a" style="left:1741.5px;top:128.5px;width:75px;height:75px;border-radius:50%;background:#fff;overflow:hidden"></div>
<svg class="a" style="left:1760px;top:139px;" width="38" height="52" viewBox="0 0 38 52">
<path d="M4 16 C1 28 1 42 2 48 C8 51 12 49 16 50 C22 51 28 48 34 47 C37 40 36 28 30 16 Z" fill="#5e3a28"/>
<path d="M5 26 C4 36 5 44 7 48 M31 26 C33 36 32 42 33 46" stroke="#8a5a3a" stroke-width="2" fill="none"/>
<ellipse cx="16.5" cy="26.5" rx="10.8" ry="11" fill="#ead6cc"/>
<path d="M4.5 19.5 C4 10 10 5.5 17 5.5 C24 5.5 30 10 29.8 19 C25 17 10 17 4.5 19.5Z" fill="#1e1e22"/>
<path d="M9 23 C10.5 22 13 22 14.5 23.5" stroke="#6a5a50" stroke-width="1.2" fill="none"/>
<circle cx="21.6" cy="22.5" r="1.6" fill="#3a2a22"/>
<path d="M13 31 C15 30 20 30 23 31 C22 35 15 35.5 13 31Z" fill="#8a2a30"/>
<path d="M15 31.3 H21" stroke="#fff" stroke-width="0.9"/>
</svg>
<div class="a" style="left:1869.5px;top:77.3px;width:25px;height:25px;border-radius:50%;background:#303134"></div>
<svg class="a" style="left:1875px;top:82.3px;" width="14" height="15" viewBox="0 0 14 15"><path d="M7 1 C5.5 1 4.8 2 4.8 3.5 V7 C4.8 8.5 5.8 9.6 7 9.6 C8.2 9.6 9.2 8.5 9.2 7 V3.5 C9.2 2 8.5 1 7 1Z" fill="#fff"/><path d="M2.5 6.5 C2.5 9.5 4.5 11.3 7 11.3 C9.5 11.3 11.5 9.5 11.5 6.5" fill="none" stroke="#fff" stroke-width="1.4"/><path d="M7 11.3 V14.5" stroke="#fff" stroke-width="1.4"/><path d="M1.5 1 L13 13.5" stroke="#303134" stroke-width="3"/><path d="M1.5 1 L13 13.5" stroke="#fff" stroke-width="1.3"/></svg>
<div class="t" style="left:1667.4px;top:234.4px;font-size:13.7px;color:#fff;font-weight:bold;">Wp MI</div>
<div class="a" style="left:1394px;top:277px;width:249px;height:197px;background:#36373a;border-radius:7px;border:4px solid #70a0f4"></div>
<div class="a" style="left:1481px;top:337.5px;width:75.5px;height:75.5px;border-radius:50%;background:#ec407a"></div>
<div class="t" style="left:1505.5px;top:356.4px;font-size:40px;color:#fff;font-weight:normal;">S</div>
<div class="a" style="left:1609px;top:285px;width:25.6px;height:25.6px;border-radius:50%;background:#1a73e8"></div>
<svg class="a" style="left:1613px;top:295px;" width="18" height="6" viewBox="0 0 18 6"><circle cx="3.5" cy="3" r="2.1" fill="#fff"/><circle cx="9" cy="3" r="2.1" fill="#fff"/><circle cx="14.5" cy="3" r="2.1" fill="#fff"/></svg>
<div class="t" style="left:1406.0px;top:442.9px;font-size:13.7px;color:#fff;font-weight:bold;">Sasipong M</div>
<div class="a" style="left:1655px;top:277px;width:248px;height:197px;background:#36373a;border-radius:7px;"></div>
<div class="a" style="left:1741.5px;top:337.5px;width:75.5px;height:75.5px;border-radius:50%;background:#ab47bc"></div>
<div class="t" style="left:1762.0px;top:356.4px;font-size:40px;color:#fff;font-weight:normal;">M</div>
<div class="a" style="left:1869.5px;top:285.5px;width:25px;height:25px;border-radius:50%;background:#303134"></div>
<svg class="a" style="left:1875px;top:290.5px;" width="14" height="15" viewBox="0 0 14 15"><path d="M7 1 C5.5 1 4.8 2 4.8 3.5 V7 C4.8 8.5 5.8 9.6 7 9.6 C8.2 9.6 9.2 8.5 9.2 7 V3.5 C9.2 2 8.5 1 7 1Z" fill="#fff"/><path d="M2.5 6.5 C2.5 9.5 4.5 11.3 7 11.3 C9.5 11.3 11.5 9.5 11.5 6.5" fill="none" stroke="#fff" stroke-width="1.4"/><path d="M7 11.3 V14.5" stroke="#fff" stroke-width="1.4"/><path d="M1.5 1 L13 13.5" stroke="#303134" stroke-width="3"/><path d="M1.5 1 L13 13.5" stroke="#fff" stroke-width="1.3"/></svg>
<div class="t" style="left:1667.0px;top:442.9px;font-size:13.7px;color:#fff;font-weight:bold;">M155 .Mdsoft</div>
<div class="a" style="left:1394px;top:486px;width:249px;height:196.5px;background:#36373a;border-radius:7px;"></div>
<svg class="a" style="left:1481px;top:546.8px;" width="75.5" height="75.5" viewBox="0 0 75.5 75.5">
<defs><clipPath id="cc"><circle cx="37.75" cy="37.75" r="37.6"/></clipPath></defs>
<g clip-path="url(#cc)">
<rect width="76" height="76" fill="#ad4a4b"/>
<g stroke="#c06a66" stroke-width="1.3"><path d="M8.3 0 V50 M35 0 V40 M47 0 V40 M58 0 V48 M67.6 0 V50"/></g>
<rect x="0" y="66" width="76" height="10" fill="#6a7a3a"/>
<ellipse cx="38.3" cy="57.6" rx="32.7" ry="14.6" fill="#e5892a"/>
<ellipse cx="38.3" cy="53" rx="28" ry="9" fill="#eea045"/>
<path d="M30 34 C40 26 56 28 63 40 C69 50 70 58 64 64 C56 68 42 68 33 67 C30 62 31 55 33 50Z" fill="#f2bf98"/>
<path d="M33 64 C44 60 58 62 68 58 C66 64 56 68 36 68Z" fill="#f5c9a6"/>
<path d="M18 30 C16 40 17 52 19 60 L23 62 L26 52 L27 62 L31 62 C32 52 36 42 38 34 C36 26 22 22 18 30Z" fill="#f4c6a2"/>
<path d="M16 28 C16 36 22 42 30 40 C38 38 39 30 36 24 L34 8 L29 14 L22 14 L17 8Z" fill="#f3c29c"/>
<ellipse cx="27" cy="32" rx="9" ry="9" fill="#fbe6d4"/>
<circle cx="23.5" cy="20" r="1" fill="#6a9ac0"/><circle cx="30" cy="20" r="1" fill="#6a9ac0"/>
</g></svg>
<div class="a" style="left:1609.5px;top:493.8px;width:25px;height:25px;border-radius:50%;background:#303134"></div>
<svg class="a" style="left:1615px;top:498.8px;" width="14" height="15" viewBox="0 0 14 15"><path d="M7 1 C5.5 1 4.8 2 4.8 3.5 V7 C4.8 8.5 5.8 9.6 7 9.6 C8.2 9.6 9.2 8.5 9.2 7 V3.5 C9.2 2 8.5 1 7 1Z" fill="#fff"/><path d="M2.5 6.5 C2.5 9.5 4.5 11.3 7 11.3 C9.5 11.3 11.5 9.5 11.5 6.5" fill="none" stroke="#fff" stroke-width="1.4"/><path d="M7 11.3 V14.5" stroke="#fff" stroke-width="1.4"/><path d="M1.5 1 L13 13.5" stroke="#303134" stroke-width="3"/><path d="M1.5 1 L13 13.5" stroke="#fff" stroke-width="1.3"/></svg>
<div class="t" style="left:1406.0px;top:652.2px;font-size:13.7px;color:#fff;font-weight:bold;">This Job</div>
<div class="a" style="left:1655px;top:486px;width:248px;height:196.5px;background:#36373a;border-radius:7px;"></div>
<div class="a" style="left:1741.5px;top:546.5px;width:75.5px;height:75.5px;border-radius:50%;background:#78909c"></div>
<div class="t" style="left:1762.0px;top:565.6px;font-size:40px;color:#fff;font-weight:normal;">M</div>
<div class="a" style="left:1869.5px;top:493.8px;width:25px;height:25px;border-radius:50%;background:#303134"></div>
<svg class="a" style="left:1875px;top:498.8px;" width="14" height="15" viewBox="0 0 14 15"><path d="M7 1 C5.5 1 4.8 2 4.8 3.5 V7 C4.8 8.5 5.8 9.6 7 9.6 C8.2 9.6 9.2 8.5 9.2 7 V3.5 C9.2 2 8.5 1 7 1Z" fill="#fff"/><path d="M2.5 6.5 C2.5 9.5 4.5 11.3 7 11.3 C9.5 11.3 11.5 9.5 11.5 6.5" fill="none" stroke="#fff" stroke-width="1.4"/><path d="M7 11.3 V14.5" stroke="#fff" stroke-width="1.4"/><path d="M1.5 1 L13 13.5" stroke="#303134" stroke-width="3"/><path d="M1.5 1 L13 13.5" stroke="#fff" stroke-width="1.3"/></svg>
<div class="t" style="left:1667.0px;top:652.2px;font-size:13.7px;color:#fff;font-weight:bold;">Mt52 .Mdsoft</div>
<div class="a" style="left:1474px;top:695px;width:350px;height:196px;background:#36373a;border-radius:7px;"></div>
<div class="a" style="left:1597px;top:740.5px;width:105.5px;height:105.5px;border-radius:50%;background:#f4511e"></div>
<div class="t" style="left:1626.5px;top:765.7px;font-size:57px;color:#fff;font-weight:normal;">M</div>
<div class="a" style="left:1789.7px;top:702.7px;width:25px;height:25px;border-radius:50%;background:#303134"></div>
<svg class="a" style="left:1795.2px;top:707.7px;" width="14" height="15" viewBox="0 0 14 15"><path d="M7 1 C5.5 1 4.8 2 4.8 3.5 V7 C4.8 8.5 5.8 9.6 7 9.6 C8.2 9.6 9.2 8.5 9.2 7 V3.5 C9.2 2 8.5 1 7 1Z" fill="#fff"/><path d="M2.5 6.5 C2.5 9.5 4.5 11.3 7 11.3 C9.5 11.3 11.5 9.5 11.5 6.5" fill="none" stroke="#fff" stroke-width="1.4"/><path d="M7 11.3 V14.5" stroke="#fff" stroke-width="1.4"/><path d="M1.5 1 L13 13.5" stroke="#303134" stroke-width="3"/><path d="M1.5 1 L13 13.5" stroke="#fff" stroke-width="1.3"/></svg>
<div class="t" style="left:1486.4px;top:860.2px;font-size:13.7px;color:#fff;font-weight:bold;">คุณ</div>
<div class="t" style="left:23.4px;top:923.7px;font-size:14.5px;color:#fff;font-weight:bold;letter-spacing:-0.3px">15:12</div>
<div class="a" style="left:71px;top:923px;width:1px;height:15.5px;background:#9aa0a6;"></div>
<div class="t" style="left:84.1px;top:923.4px;font-size:15.1px;color:#fff;font-weight:bold;">RN Website Training [1]</div>
<div class="a" style="left:823.8px;top:910.5999999999999px;width:40.4px;height:40.4px;border-radius:20.2px;background:#ea4335"></div>
<svg class="a" style="left:834px;top:921px;" width="20" height="20" viewBox="0 0 20 20"><path d="M10 3 C8.6 3 7.6 4 7.6 5.4 V10 C7.6 11.4 8.6 12.4 10 12.4 C11.4 12.4 12.4 11.4 12.4 10 V5.4 C12.4 4 11.4 3 10 3Z" fill="#fff"/><path d="M5 9.5 C5 12.8 7.3 14.8 10 14.8 C12.7 14.8 15 12.8 15 9.5" fill="none" stroke="#fff" stroke-width="1.6"/><path d="M10 14.8 V18" stroke="#fff" stroke-width="1.6"/><path d="M3.5 3 L17 17" stroke="#ea4335" stroke-width="3.4"/><path d="M3.5 3 L17 17" stroke="#fff" stroke-width="1.6"/></svg>
<div class="a" style="left:875.8px;top:910.5999999999999px;width:40.4px;height:40.4px;border-radius:20.2px;background:#ea4335"></div>
<svg class="a" style="left:886px;top:921px;" width="20" height="20" viewBox="0 0 20 20"><path d="M2.5 5.5 H13.5 V15 H2.5Z" fill="none" stroke="#fff" stroke-width="1.7"/><path d="M13.5 9 L18 6 V14.5 L13.5 11.5Z" fill="#fff"/><path d="M2 3 L16.5 17.5" stroke="#ea4335" stroke-width="3.2"/><path d="M2 3 L16.5 17.5" stroke="#fff" stroke-width="1.6"/></svg>
<div class="a" style="left:927.8px;top:910.5999999999999px;width:40.4px;height:40.4px;border-radius:20.2px;background:#3c4043"></div>
<svg class="a" style="left:937px;top:921px;" width="22" height="20" viewBox="0 0 22 20"><rect x="1.5" y="2" width="19" height="16" fill="none" stroke="#fff" stroke-width="2"/><path d="M11 6.5 L15 10.5 H12.5 V13.5 H9.5 V10.5 H7Z" fill="#fff"/></svg>
<div class="a" style="left:979.8px;top:910.5999999999999px;width:40.4px;height:40.4px;border-radius:20.2px;background:#3c4043"></div>
<svg class="a" style="left:996px;top:921px;" width="8" height="20" viewBox="0 0 8 20"><circle cx="4" cy="3.5" r="2.3" fill="#fff"/><circle cx="4" cy="10" r="2.3" fill="#fff"/><circle cx="4" cy="16.5" r="2.3" fill="#fff"/></svg>
<div class="a" style="left:1031.8px;top:910.5999999999999px;width:56px;height:40.4px;border-radius:20.2px;background:#ea4335"></div>
<svg class="a" style="left:1047px;top:924px;" width="26" height="12" viewBox="0 0 26 12"><path d="M1 8.5 C1 5 6 2 13 2 C20 2 25 5 25 8.5 L24.5 10 L19 9 L18 6.3 C15 5.5 11 5.5 8 6.3 L7 9 L1.5 10Z" fill="#fff"/></svg>
<svg class="a" style="left:1722px;top:920.5px;" width="22" height="22" viewBox="0 0 22 22"><circle cx="11" cy="11" r="9.2" fill="none" stroke="#fff" stroke-width="2.2"/><rect x="9.8" y="9.3" width="2.6" height="6.8" fill="#fff"/><circle cx="11.1" cy="6.6" r="1.5" fill="#fff"/></svg>
<svg class="a" style="left:1769px;top:922.5px;" width="25" height="18" viewBox="0 0 25 18"><circle cx="8.6" cy="5.2" r="3.8" fill="none" stroke="#fff" stroke-width="2.4"/><path d="M15 1.6 A3.8 3.8 0 0 1 15 9" fill="none" stroke="#fff" stroke-width="2.4"/><path d="M1.3 16.5 C1.5 12.5 5 11 8.6 11 C12.2 11 15.7 12.5 15.9 16.5Z" fill="none" stroke="#fff" stroke-width="2.4"/><path d="M17.5 11.2 C20.5 11.7 23.2 13 23.3 16.5 H18" fill="#fff" stroke="#fff" stroke-width="1"/></svg>
<div class="a" style="left:1782px;top:902px;width:20px;height:20px;border-radius:50%;background:#5f6368;color:#fff;font-size:11.5px;font-weight:bold;line-height:20px;text-align:center">8</div>
<svg class="a" style="left:1818px;top:921px;" width="22" height="21" viewBox="0 0 22 21"><path d="M1.5 2 H20 V16.5 H5 L1.5 20Z" fill="none" stroke="#fff" stroke-width="2.2"/><path d="M5 6.5 H16.5 M5 10 H16.5 M5 13.3 H12" stroke="#fff" stroke-width="2"/></svg>
<div class="a" style="left:1833.5px;top:916.5px;width:9px;height:9px;border-radius:50%;background:#8ab4f8;border:1px solid #202124"></div>
<svg class="a" style="left:1867px;top:921px;" width="21" height="20" viewBox="0 0 21 20"><path d="M10.5 1.5 L15.3 9 H5.7Z" fill="none" stroke="#fff" stroke-width="2.2" stroke-linejoin="round"/><rect x="1.5" y="12" width="7" height="7" fill="none" stroke="#fff" stroke-width="2.2"/><circle cx="16" cy="15.5" r="3.6" fill="none" stroke="#fff" stroke-width="2.2"/></svg>
<svg class="a" style="left:1266px;top:886px;" width="13" height="18" viewBox="0 0 13 18"><path d="M1 1 L1 15 L4.5 11.8 L7.2 17 L9.4 16 L6.8 10.8 L11.5 10.8Z" fill="#fff" stroke="#111" stroke-width="1"/></svg>
</body></html>
